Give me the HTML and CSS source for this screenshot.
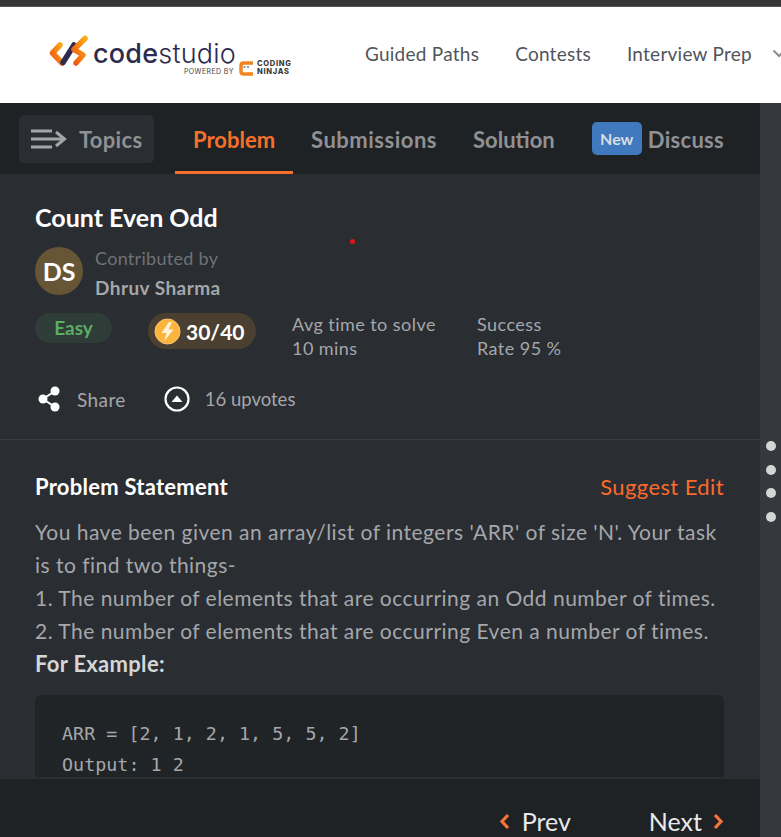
FILE: index.html
```html
<!DOCTYPE html>
<html lang="en">
<head>
    <meta charset="UTF-8">
    <meta name="viewport" content="width=device-width, initial-scale=1.0">
    <title>Count Even Odd - Code Studio</title>
    <link rel="stylesheet" href="styles.css">
</head>
<body>
    <div class="topline"></div>

    <header class="site-header">
        <a class="logo">
            <svg class="logo-mark" width="58" height="32" viewBox="0 0 58 32">
                <defs>
                    <linearGradient id="orange" x1="0" y1="1" x2="1" y2="0">
                        <stop offset="0" stop-color="#f0560f"/>
                        <stop offset="1" stop-color="#fbab19"/>
                    </linearGradient>
                </defs>
                <path d="M11 10 L3.500 18 L13 28" fill="none" stroke="url(#orange)" stroke-width="5.500" stroke-linecap="round" stroke-linejoin="round"/>
                <path d="M25 10 L14 27.500" fill="none" stroke="#2d2b4e" stroke-width="5.500" stroke-linecap="round"/>
                <path d="M36 3.500 L25 14.500 L34 20 L27 28" fill="none" stroke="url(#orange)" stroke-width="5.500" stroke-linecap="round" stroke-linejoin="round"/>
            </svg>
            <div class="logo-text">
                <div class="logo-name"><b>code</b>studio</div>
                <div class="logo-sub">
                    <span class="powered">POWERED BY</span>
                    <svg width="14" height="15" viewBox="0 0 14 15">
                        <path d="M14 2 H4.500 Q2 2 2 4.500 V10.500 Q2 13 4.500 13 H14" fill="none" stroke="#f58220" stroke-width="3.500"/>
                        <path d="M4.500 6 H6.500 M8 6 H10" stroke="#333" stroke-width="1.200"/>
                    </svg>
                    <span class="cn">CODING<br>NINJAS</span>
                </div>
            </div>
        </a>
        <nav class="site-nav">
            <a>Guided Paths</a>
            <a>Contests</a>
            <a>Interview Prep</a>
            <svg class="nav-caret" width="14" height="9" viewBox="0 0 14 9"><path d="M1.500 1.500 L7 7 L12.500 1.500" fill="none" stroke="#8a8d92" stroke-width="2"/></svg>
        </nav>
    </header>

    <div class="workspace">
        <main class="panel">
            <div class="tabs">
                <div class="topics">
                    <svg width="36" height="20" viewBox="0 0 36 20">
                        <path d="M0 2 H21 M0 10 H34 M0 18 H21" stroke="#a3a5a8" stroke-width="3"/>
                        <path d="M25 3 L33.500 10 L25 17" fill="none" stroke="#a3a5a8" stroke-width="3"/>
                    </svg>
                    <span>Topics</span>
                </div>
                <a class="tab active">Problem</a>
                <a class="tab tab-wide">Submissions</a>
                <a class="tab">Solution</a>
                <div class="tab-discuss">
                    <span class="new-badge">New</span>
                    <a class="tab">Discuss</a>
                </div>
            </div>

            <div class="scroll">
                <section class="summary">
                    <span class="red-dot"></span>
                    <h1>Count Even Odd</h1>
                    <div class="author">
                        <div class="avatar">DS</div>
                        <div class="author-text">
                            <div class="contributed">Contributed by</div>
                            <div class="author-name">Dhruv Sharma</div>
                        </div>
                    </div>
                    <div class="stats">
                        <span class="easy">Easy</span>
                        <span class="points">
                            <svg width="27" height="27" viewBox="0 0 27 27">
                                <circle cx="13.500" cy="13.500" r="12.500" fill="#fdb43c" stroke="#fcc873"/>
                                <path d="M15 4 L7.500 15 H12.500 L10 23.500 L19.500 11.500 H14.500 L18 4 Z" fill="#fff3dc"/>
                            </svg>
                            30/40
                        </span>
                        <div class="stat stat-time">Avg time to solve<br>10 mins</div>
                        <div class="stat">Success<br>Rate 95 %</div>
                    </div>
                    <div class="actions">
                        <span class="action action-share">
                            <svg width="24" height="26" viewBox="0 0 24 26">
                                <path d="M18 5 L6 13 L18 21" fill="none" stroke="#fff" stroke-width="2"/>
                                <circle cx="18" cy="5" r="4.500" fill="#fff"/>
                                <circle cx="6" cy="13" r="4.500" fill="#fff"/>
                                <circle cx="18" cy="21" r="4.500" fill="#fff"/>
                            </svg>
                            Share
                        </span>
                        <span class="action action-upvote">
                            <svg width="26" height="26" viewBox="0 0 26 26">
                                <circle cx="13" cy="13" r="11.500" fill="none" stroke="#fff" stroke-width="2.200"/>
                                <path d="M7.500 16 L13 9.500 L18.500 16 Z" fill="#fff"/>
                            </svg>
                            16 upvotes
                        </span>
                    </div>
                </section>

                <section class="statement">
                    <div class="statement-head">
                        <h2>Problem Statement</h2>
                        <a class="suggest">Suggest Edit</a>
                    </div>
                    <p>You have been given an array/list of integers 'ARR' of size 'N'. Your task is to find two things-</p>
                    <p>1. The number of elements that are occurring an Odd number of times.</p>
                    <p>2. The number of elements that are occurring Even a number of times.</p>
                    <p><strong>For Example:</strong></p>
                    <pre class="code">ARR = [2, 1, 2, 1, 5, 5, 2]
Output: 1 2</pre>
                </section>
            </div>

            <footer class="pager">
                <a class="pager-link pager-prev">
                    <svg width="11" height="17" viewBox="0 0 11 17"><path d="M9 2 L3 8.500 L9 15" fill="none" stroke="#f6743a" stroke-width="3.200"/></svg>
                    Prev
                </a>
                <a class="pager-link">
                    Next
                    <svg width="11" height="17" viewBox="0 0 11 17"><path d="M2 2 L8 8.500 L2 15" fill="none" stroke="#f6743a" stroke-width="3.200"/></svg>
                </a>
            </footer>
        </main>

        <aside class="divider">
            <span></span><span></span><span></span><span></span>
        </aside>
    </div>
</body>
</html>
```

FILE: styles.css
```css
html, body {
    margin: 0;
    height: 100%;
}

body {
    font-family: "Lato", "Noto Sans", sans-serif;
    background-color: #35383d;
    display: flex;
    flex-direction: column;
    height: 837px;
    overflow: hidden;
}

.topline {
    height: 6px;
    flex: none;
    background: #363636;
    border-bottom: 1px solid #555;
}

.site-header {
    height: 96px;
    flex: none;
    background: white;
    display: flex;
    align-items: center;
    padding-left: 49px;
    overflow: hidden;
}

.logo {
    display: flex;
    align-items: flex-start;
    align-self: flex-start;
    width: 316px;
    flex: none;
}

.logo-mark {
    flex: none;
    margin-top: 28px;
    margin-right: -14px;
}

.logo-text {
    width: 210px;
    margin-top: 37px;
}

.logo-name {
    font-family: "Inter", sans-serif;
    font-size: 27px;
    line-height: 20px;
    color: #2d2b4e;
    font-weight: 300;
    letter-spacing: 0.2px;
    white-space: nowrap;
}

.logo-name b {
    font-weight: 500;
}

.logo-sub {
    display: flex;
    align-items: flex-end;
    margin-top: -4px;
    padding-left: 91px;
    gap: 5px;
}

.powered {
    font-family: "Inter", sans-serif;
    font-size: 7px;
    line-height: 9px;
    letter-spacing: 0.4px;
    color: #444;
    white-space: nowrap;
}

.cn {
    font-family: "Inter", sans-serif;
    font-size: 7.500px;
    line-height: 8px;
    font-weight: 800;
    letter-spacing: 0.7px;
    color: #3a3a3a;
    margin-left: -1px;
}

.site-nav {
    display: flex;
    align-items: center;
    gap: 36px;
    white-space: nowrap;
    font-size: 19px;
    letter-spacing: 0.25px;
    color: #51555c;
    margin-top: -3px;
}

.nav-caret {
    margin-left: -16px;
    flex: none;
}

.workspace {
    flex: 1;
    display: flex;
    min-height: 0;
}

.panel {
    width: 760px;
    flex: none;
    display: flex;
    flex-direction: column;
    background: #2a2d32;
    min-height: 0;
}

.tabs {
    height: 71px;
    flex: none;
    background: #1f2225;
    display: flex;
    align-items: stretch;
    padding-left: 19px;
    color: #8f9194;
    font-size: 22px;
    font-weight: 700;
}

.topics {
    display: flex;
    align-items: center;
    gap: 12px;
    width: 135px;
    height: 48px;
    margin-top: 12px;
    padding-left: 12px;
    box-sizing: border-box;
    background: #2a2d32;
    border-radius: 5px;
    letter-spacing: 0.3px;
}

.tab {
    display: flex;
    align-items: center;
    padding: 2px 18px 0;
    height: 71px;
    box-sizing: border-box;
}

.tab-wide {
    letter-spacing: 0.5px;
}

.topics + .tab {
    margin-left: 21px;
}

.tab.active {
    color: #f5712b;
    border-bottom: 3px solid #f5712b;
    padding-top: 5px;
}

.tab-discuss {
    display: flex;
    align-items: center;
    margin-left: 19px;
}

.tab-discuss .tab {
    padding-left: 6px;
    padding-right: 0;
    letter-spacing: 0.3px;
}

.new-badge {
    background: #4079bd;
    color: #d8dde3;
    font-size: 16px;
    width: 50px;
    height: 33px;
    border-radius: 5px;
    display: flex;
    align-items: center;
    justify-content: center;
}

.scroll {
    flex: 1;
    min-height: 0;
    overflow: hidden;
    margin-bottom: 2px;
}

.summary {
    position: relative;
    padding: 27px 36px 0 35px;
    box-sizing: border-box;
    border-bottom: 1px solid #3a3d42;
    height: 266px;
}

.red-dot {
    position: absolute;
    left: 350px;
    top: 65px;
    width: 5px;
    height: 5px;
    border-radius: 50%;
    background: #e01414;
}

h1 {
    margin: 0;
    color: #fff;
    font-size: 25px;
    line-height: 32px;
    font-weight: 700;
}

.author {
    display: flex;
    gap: 12px;
    margin-top: 14px;
    align-items: flex-start;
}

.avatar {
    width: 48px;
    height: 48px;
    border-radius: 50%;
    background: #665636;
    color: #fff;
    font-size: 25px;
    font-weight: 700;
    display: flex;
    align-items: center;
    justify-content: center;
}

.author-text {
    margin-top: -1px;
}

.contributed {
    color: #6f7276;
    font-size: 18px;
    line-height: 24px;
    letter-spacing: 0.3px;
}

.author-name {
    color: #a5a7aa;
    font-size: 19px;
    font-weight: 700;
    line-height: 24px;
    letter-spacing: 0.45px;
    margin-top: 6px;
    height: 19px;
    overflow: hidden;
}

.stats {
    display: flex;
    align-items: flex-start;
    margin-top: 18px;
}

.easy {
    width: 77px;
    height: 30px;
    border-radius: 15px;
    background: #2f3d38;
    color: #5aad62;
    font-size: 19px;
    font-weight: 700;
    display: flex;
    align-items: center;
    justify-content: center;
    flex: none;
    box-sizing: border-box;
    padding-bottom: 2px;
}

.points {
    margin-left: 36px;
    width: 108px;
    height: 36px;
    border-radius: 18px;
    background: #4a3f30;
    color: #fff;
    font-size: 21px;
    font-weight: 700;
    display: flex;
    align-items: center;
    gap: 5px;
    padding-left: 6px;
    box-sizing: border-box;
    flex: none;
}

.stat {
    color: #a5a7aa;
    font-size: 18px;
    line-height: 24px;
    letter-spacing: 0.45px;
    margin-top: -1px;
}

.stat-time {
    margin-left: 36px;
    width: 185px;
}

.actions {
    display: flex;
    margin-top: 26px;
    color: #a5a7aa;
    font-size: 19px;
}

.action {
    display: flex;
    align-items: center;
    gap: 15px;
}

.action-share {
    margin-left: 2px;
    margin-right: 38px;
    gap: 16px;
    letter-spacing: 0.4px;
}

.action-upvote {
    font-size: 18.500px;
}

.statement {
    padding: 32px 36px 0 35px;
    color: #a5a7aa;
    font-size: 21px;
    line-height: 33px;
    letter-spacing: 0.48px;
}

.statement-head {
    display: flex;
    justify-content: space-between;
    align-items: center;
    height: 28px;
    margin-bottom: 15px;
}

h2 {
    margin: 0;
    color: #fff;
    font-size: 22px;
    font-weight: 700;
    letter-spacing: 0.25px;
}

.suggest {
    color: #fb6b2b;
    font-size: 22px;
    letter-spacing: 0.4px;
}

.statement p {
    margin: 0;
}

.statement strong {
    color: #d5d6d8;
    font-size: 22px;
    letter-spacing: 0.3px;
}

.code {
    margin: 15px 0 0;
    padding: 23px 27px;
    background: #212427;
    border-radius: 6px;
    font-family: "DejaVu Sans Mono", monospace;
    font-size: 18.330px;
    line-height: 31px;
    letter-spacing: 0.03px;
    color: #a5a7aa;
}

.pager {
    height: 58px;
    flex: none;
    background: #1f2225;
    display: flex;
    justify-content: flex-end;
    align-items: flex-end;
    gap: 78px;
    padding-right: 36px;
    box-sizing: border-box;
    padding-bottom: 1px;
}

.pager-link {
    display: flex;
    align-items: center;
    gap: 11px;
    color: #e8e9ea;
    font-size: 25px;
    line-height: 30px;
}

.pager-prev {
    gap: 12px;
}

.divider {
    flex: 1;
    display: flex;
    flex-direction: column;
    align-items: center;
    justify-content: flex-start;
    gap: 13.500px;
    padding-top: 338px;
    background: #35383d;
}

.divider span {
    width: 10px;
    height: 10px;
    border-radius: 50%;
    background: #d5d5d5;
}
```
